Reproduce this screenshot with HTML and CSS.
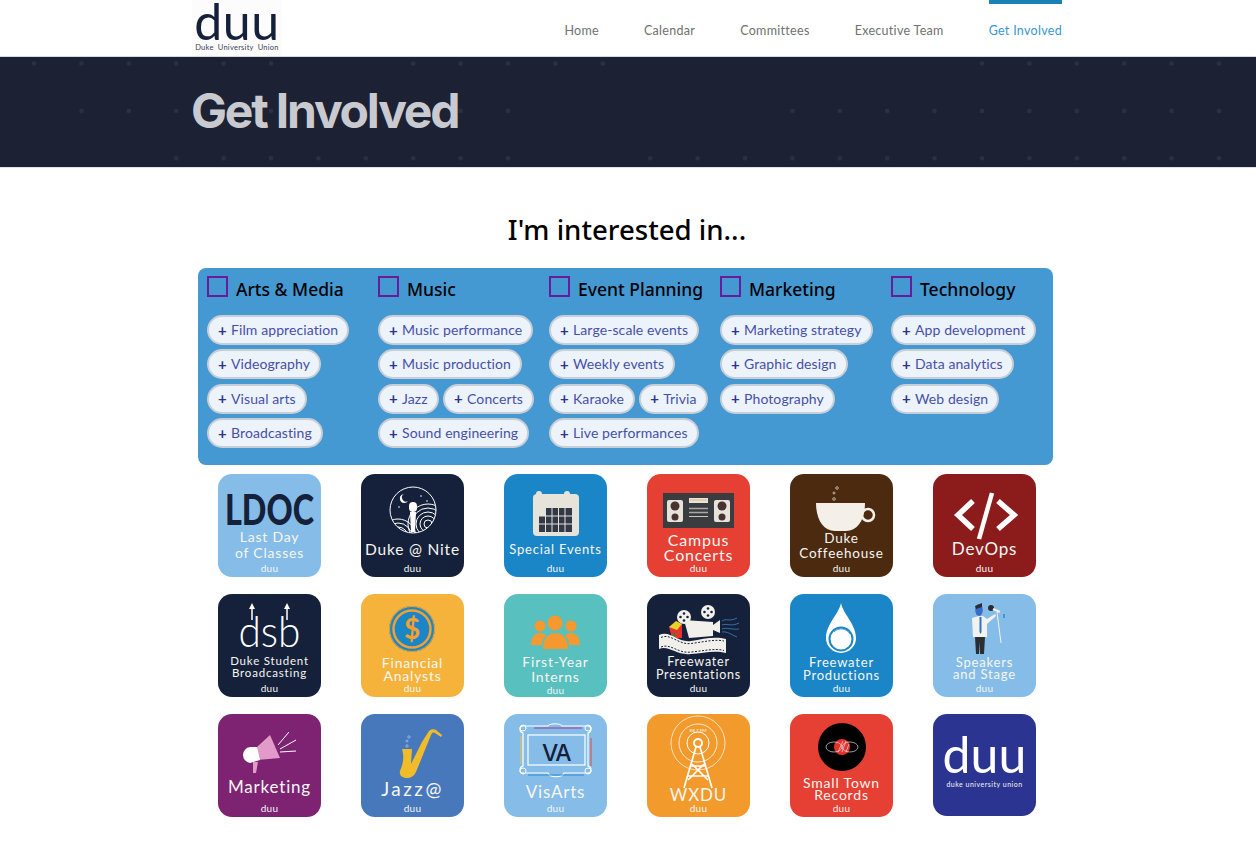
FILE: index.html
```html
<!DOCTYPE html>
<html lang="en">
<head>
  <meta charset="UTF-8">
  <title>Get Involved</title>
  <link rel="stylesheet" href="styles.css">
</head>
<body>
  <!-- Top nav -->
  <header class="topbar">
    <div class="wrap topbar-inner">
      <a class="logo" href="#">
        <span class="logo-word">duu</span>
        <span class="logo-sub">Duke University Union</span>
      </a>
      <nav class="nav">
        <a href="#">Home</a>
        <a href="#">Calendar</a>
        <a href="#">Committees</a>
        <a href="#">Executive Team</a>
        <a href="#" class="active">Get Involved</a>
      </nav>
    </div>
  </header>

  <section class="hero">
    <svg class="hero-dots" width="1256" height="110" aria-hidden="true">
      <defs>
        <pattern id="dots" x="10.300" y="-17.200" width="47.400" height="47.400" patternUnits="userSpaceOnUse">
          <circle cx="23.700" cy="23.700" r="2.300" fill="#2b3042"/>
        </pattern>
      </defs>
      <g fill="url(#dots)">
        <rect x="20" y="0" width="270" height="13"/>
        <rect x="400" y="0" width="220" height="13"/>
        <rect x="970" y="0" width="270" height="13"/>
        <rect x="70" y="47" width="120" height="13"/>
        <rect x="260" y="47" width="25" height="13"/>
        <rect x="450" y="47" width="70" height="13"/>
        <rect x="780" y="47" width="460" height="13"/>
        <rect x="165" y="95" width="355" height="13"/>
        <rect x="640" y="95" width="600" height="13"/>
      </g>
    </svg>
    <div class="wrap">
      <h1>Get Involved</h1>
    </div>
  </section>

  <main class="wrap">
    <h2 class="interest-title">I'm interested in...</h2>

    <!-- Interest filters -->
    <div class="filters">
      <div class="filter-col">
        <label class="filter-head"><span class="box"></span>Arts &amp; Media</label>
        <div class="pills">
          <span class="pill"><b>+</b>Film appreciation</span>
          <span class="pill"><b>+</b>Videography</span>
          <span class="pill"><b>+</b>Visual arts</span>
          <span class="pill"><b>+</b>Broadcasting</span>
        </div>
      </div>
      <div class="filter-col">
        <label class="filter-head"><span class="box"></span>Music</label>
        <div class="pills">
          <span class="pill"><b>+</b>Music performance</span>
          <span class="pill"><b>+</b>Music production</span>
          <span class="pill"><b>+</b>Jazz</span>
          <span class="pill"><b>+</b>Concerts</span>
          <span class="pill"><b>+</b>Sound engineering</span>
        </div>
      </div>
      <div class="filter-col">
        <label class="filter-head"><span class="box"></span>Event Planning</label>
        <div class="pills">
          <span class="pill"><b>+</b>Large-scale events</span>
          <span class="pill"><b>+</b>Weekly events</span>
          <span class="pill"><b>+</b>Karaoke</span>
          <span class="pill"><b>+</b>Trivia</span>
          <span class="pill"><b>+</b>Live performances</span>
        </div>
      </div>
      <div class="filter-col">
        <label class="filter-head"><span class="box"></span>Marketing</label>
        <div class="pills">
          <span class="pill"><b>+</b>Marketing strategy</span>
          <span class="pill"><b>+</b>Graphic design</span>
          <span class="pill"><b>+</b>Photography</span>
        </div>
      </div>
      <div class="filter-col">
        <label class="filter-head"><span class="box"></span>Technology</label>
        <div class="pills">
          <span class="pill"><b>+</b>App development</span>
          <span class="pill"><b>+</b>Data analytics</span>
          <span class="pill"><b>+</b>Web design</span>
        </div>
      </div>
    </div>

    <!-- Committee tiles. Each svg is as tall as the space above its label -->
    <div class="tiles">

      <a class="tile c-sky" href="#">
        <svg width="103" height="55" viewBox="0 0 103 55">
          <text x="7" y="51" class="ldoc" textLength="89" lengthAdjust="spacingAndGlyphs">LDOC</text>
        </svg>
        <span class="label s14 h16">Last Day<br>of Classes</span>
        <span class="duu">duu</span>
      </a>

      <a class="tile c-navy" href="#">
        <svg width="103" height="67" viewBox="0 0 103 67">
          <defs><clipPath id="nite"><circle cx="52" cy="36" r="23"/></clipPath></defs>
          <circle cx="52" cy="36" r="23" fill="none" stroke="#fff" stroke-width="1"/>
          <g clip-path="url(#nite)" fill="none" stroke="#fff" stroke-width="1">
            <circle cx="67" cy="50" r="4"/><circle cx="67" cy="50" r="8"/><circle cx="67" cy="50" r="12"/><circle cx="67" cy="50" r="16"/><circle cx="67" cy="50" r="20"/>
            <circle cx="37" cy="63" r="6"/><circle cx="37" cy="63" r="10"/><circle cx="37" cy="63" r="14"/><circle cx="37" cy="63" r="18"/>
          </g>
          <path d="M43 20a4.500 4.500 0 1 0 4 7a4 4 0 0 1-4-7z" fill="#fff"/>
          <circle cx="60" cy="22" r=".8" fill="#fff"/><circle cx="66" cy="27" r=".8" fill="#fff"/><circle cx="38" cy="33" r=".8" fill="#fff"/>
          <rect x="48" y="28" width="8" height="10" rx="4" fill="#fff"/>
          <path d="M49 38h6l-1 20h-4z" fill="#fff"/>
        </svg>
        <span class="label s155 h16">Duke @ Nite</span>
        <span class="duu">duu</span>
      </a>

      <a class="tile c-blue" href="#">
        <svg width="103" height="67" viewBox="0 0 103 67">
          <rect x="29" y="20" width="46" height="42" rx="4" fill="#e6e3da"/>
          <rect x="32" y="17" width="6" height="6" rx="3" fill="#e6e3da"/>
          <rect x="60" y="17" width="6" height="6" rx="3" fill="#e6e3da"/>
          <rect x="35" y="34" width="33" height="24" fill="#333846"/>
          <rect x="35" y="34" width="6" height="8" fill="#e6e3da"/>
          <path d="M41.500 34v24M48 34v24M54.500 34v24M61 34v24M35 42h33M35 50h33" stroke="#e6e3da" stroke-width="1"/>
        </svg>
        <span class="label s13 h16">Special Events</span>
        <span class="duu">duu</span>
      </a>

      <a class="tile c-red" href="#">
        <svg width="103" height="58" viewBox="0 0 103 58">
          <rect x="16" y="19" width="71" height="35" fill="#3a3c40"/>
          <rect x="20" y="26" width="16" height="22" rx="2" fill="#e6e3da"/>
          <rect x="67" y="26" width="16" height="22" rx="2" fill="#e6e3da"/>
          <circle cx="28" cy="32" r="4.500" fill="#4a3230"/><circle cx="28" cy="43" r="3.500" fill="#4a3230"/>
          <circle cx="75" cy="32" r="4.500" fill="#4a3230"/><circle cx="75" cy="43" r="3.500" fill="#4a3230"/>
          <rect x="42" y="24" width="19" height="5" fill="#e6e3da"/>
          <rect x="43" y="25.500" width="17" height="1" fill="#e8b878"/>
          <path d="M42 34.500h19M42 38.500h19" stroke="#a8a8a4" stroke-width="1.500"/>
          <path d="M42 42.500h19" stroke="#c8c8c4" stroke-width="1"/>
        </svg>
        <span class="label s16 h15">Campus<br>Concerts</span>
        <span class="duu">duu</span>
      </a>

      <a class="tile c-brown" href="#">
        <svg width="103" height="57" viewBox="0 0 103 57">
          <path d="M26 29H75C75 45 68 57 56 57H45C33 57 26 45 26 29z" fill="#f4efe9"/>
          <circle cx="78" cy="41" r="6" fill="none" stroke="#f4efe9" stroke-width="2.500"/>
          <g fill="none" stroke="#d8cfc4" stroke-width=".8">
            <circle cx="47" cy="14" r="1.300"/><circle cx="44" cy="19" r="1"/><circle cx="44" cy="25" r="1.300"/>
          </g>
        </svg>
        <span class="label s135 h15">Duke<br>Coffeehouse</span>
        <span class="duu">duu</span>
      </a>

      <a class="tile c-maroon" href="#">
        <svg width="103" height="67" viewBox="0 0 103 67">
          <g fill="none" stroke="#fff" stroke-width="5.500">
            <path d="M40 27L25 41L40 55"/>
            <path d="M65 27L81 41L65 55"/>
            <path d="M59 19L46 65" stroke-width="4.500"/>
          </g>
        </svg>
        <span class="label s17 h16">DevOps</span>
        <span class="duu">duu</span>
      </a>

      <a class="tile c-navy" href="#">
        <svg width="103" height="61" viewBox="0 0 103 61">
          <text x="51.500" y="53" class="dsb" text-anchor="middle" textLength="62" lengthAdjust="spacingAndGlyphs">dsb</text>
          <path d="M34 12V26M69 12V26" stroke="#fff" stroke-width="1.500"/>
          <path d="M31 15L34 9L37 15zM66 15L69 9L72 15z" fill="#fff"/>
        </svg>
        <span class="label s115 h12">Duke Student<br>Broadcasting</span>
        <span class="duu">duu</span>
      </a>

      <a class="tile c-gold" href="#">
        <svg width="103" height="62" viewBox="0 0 103 62">
          <circle cx="51" cy="35" r="23" fill="#1a86c8"/>
          <circle cx="51" cy="35" r="18.500" fill="none" stroke="#f3a02f" stroke-width="2.500"/>
          <circle cx="51" cy="35" r="22.500" fill="none" stroke="#f3a02f" stroke-width="1"/>
          <text x="51" y="45" class="dollar" text-anchor="middle">$</text>
        </svg>
        <span class="label s14 h13">Financial<br>Analysts</span>
        <span class="duu">duu</span>
      </a>

      <a class="tile c-teal" href="#">
        <svg width="103" height="60" viewBox="0 0 103 60" fill="#f3992f">
          <circle cx="36" cy="32" r="5.500"/><circle cx="67" cy="32" r="5.500"/><circle cx="51" cy="29" r="7.500"/>
          <path d="M27 51C27 43 31 39 36 39C39 39 41 40 42 42C39 44 38 47 38 51z"/>
          <path d="M76 51C76 43 72 39 67 39C64 39 62 40 61 42C64 44 65 47 65 51z"/>
          <path d="M39 55C39 45 44 39 51.500 39C59 39 64 45 64 55z"/>
        </svg>
        <span class="label s14 h15">First-Year<br>Interns</span>
        <span class="duu">duu</span>
      </a>

      <a class="tile c-navy" href="#">
        <svg width="103" height="61" viewBox="0 0 103 61">
          <path d="M37 26L66 28V42L42 44z" fill="#f2f0ea"/>
          <path d="M66 31L73 26V39L66 36z" fill="#f2f0ea"/>
          <circle cx="37" cy="23" r="7" fill="#f2f0ea"/><circle cx="61" cy="18" r="7" fill="#f2f0ea"/>
          <g fill="#15203a">
            <circle cx="37" cy="19.500" r="1.300"/><circle cx="37" cy="26.500" r="1.300"/><circle cx="33.500" cy="23" r="1.300"/><circle cx="40.500" cy="23" r="1.300"/>
            <circle cx="61" cy="14.500" r="1.300"/><circle cx="61" cy="21.500" r="1.300"/><circle cx="57.500" cy="18" r="1.300"/><circle cx="64.500" cy="18" r="1.300"/>
          </g>
          <path d="M22 33L35 30V44H25z" fill="#e5322d"/>
          <path d="M22 33L29 27L35 30L30 36z" fill="#e9d02c"/>
          <path d="M24 44L28 37V44z" fill="#1d8a4a"/>
          <g fill="none" stroke="#3a86c8" stroke-width=".8">
            <path d="M75 27C79 24 83 28 90 24"/><path d="M75 31C80 29 84 33 92 29"/><path d="M75 35C80 33 85 36 92 35"/><path d="M75 38C80 37 85 41 90 43"/>
          </g>
          <path d="M12 41C24 36 30 49 44 47C56 45 68 42 79 45V59C68 56 56 59 44 60C30 62 22 51 12 55z" fill="#f2f0ea"/>
          <path d="M14 43.500C24 39 31 51 44 49.500C56 48 68 45 77 47M14 53C24 49 31 60 44 58C56 57 68 54 77 56.500" fill="none" stroke="#15203a" stroke-width="1" stroke-dasharray="2 1.500"/>
        </svg>
        <span class="label s125 h13">Freewater<br>Presentations</span>
        <span class="duu">duu</span>
      </a>

      <a class="tile c-blue" href="#">
        <svg width="103" height="62" viewBox="0 0 103 62">
          <path d="M51 9C53 20 66 30 66 44A15 15 0 0 1 36 44C36 30 49 20 51 9z" fill="#fff"/>
          <circle cx="51" cy="45" r="11.500" fill="none" stroke="#1a86c8" stroke-width="2"/>
          <path d="M44 38A10 10 0 0 1 60 40" fill="none" stroke="#1a86c8" stroke-width=".8"/>
        </svg>
        <span class="label s13 h13">Freewater<br>Productions</span>
        <span class="duu">duu</span>
      </a>

      <a class="tile c-sky" href="#">
        <svg width="103" height="62" viewBox="0 0 103 62">
          <path d="M42 43H52L51 60H47L46.500 48L46 60H43z" fill="#2b2d33"/>
          <path d="M39 24L46 22H50L54 25L62 20L63 22L54 30V43H40z" fill="#f2f2ee"/>
          <path d="M46.500 23H48.500L48.500 38L47.500 40L46.500 38z" fill="#2f74c0"/>
          <ellipse cx="46" cy="16" rx="3.800" ry="6" fill="#3a6bc8"/>
          <path d="M42 12L49 9V13L43 15z" fill="#2b2d33"/>
          <circle cx="58" cy="14" r="3" fill="#2b2d33"/>
          <path d="M60 15L67 18" stroke="#f2f2ee" stroke-width="2"/>
          <path d="M64 18L68 49" stroke="#f2f2ee" stroke-width="1"/>
          <path d="M71 20V24" stroke="#2f8ad0" stroke-width="1.500"/>
        </svg>
        <span class="label s13 h12">Speakers<br>and Stage</span>
        <span class="duu">duu</span>
      </a>

      <a class="tile c-purple" href="#">
        <svg width="103" height="64" viewBox="0 0 103 64">
          <path d="M39 33L52 21L62 44L39 46z" fill="#e29bc8"/>
          <path d="M35 48H40L38 59H35z" fill="#e29bc8"/>
          <path d="M32 33H39L42 46L32 49A8 8 0 0 1 25 41A8 8 0 0 1 32 33z" fill="#fff"/>
          <path d="M60 31L71 18M62 35L78 26M62 38L78 37" stroke="#fff" stroke-width="1"/>
        </svg>
        <span class="label s17 h18">Marketing</span>
        <span class="duu">duu</span>
      </a>

      <a class="tile c-steel" href="#">
        <svg width="103" height="66" viewBox="0 0 103 66">
          <path d="M41 35H51L50 50L61 28L68 17C70 15 73 15 75 16L81 21L80 23L74 19C72 18 71 19 70 21L55 58C53 62 50 64 46 64C41 64 38 61 39 57C41 52 44 45 41 35z" fill="#f0bc2a"/>
          <g fill="none" stroke="#9cc0e8" stroke-width=".8">
            <circle cx="48" cy="23" r="1.200"/><circle cx="46" cy="27" r="1"/><circle cx="46" cy="32" r="1.200"/>
          </g>
        </svg>
        <span class="label s19 h18 wide">Jazz@</span>
        <span class="duu">duu</span>
      </a>

      <a class="tile c-sky" href="#">
        <svg width="103" height="70" viewBox="0 0 103 70">
          <path d="M19 12H44C46 9 56 9 58 12H84C88 12 88 18 84 19V52C88 53 88 59 84 59H60C58 64 46 64 44 59H19C15 59 15 53 19 52V19C15 18 15 12 19 12z" fill="none" stroke="#fff" stroke-width="1.200"/>
          <path d="M30 14H78" stroke="#a0399c" stroke-width="1"/>
          <path d="M17 22V50" stroke="#f0c23a" stroke-width="1"/>
          <path d="M87 24V52" stroke="#e5483a" stroke-width="1"/>
          <path d="M24 61H80" stroke="#2f8ad0" stroke-width="1"/>
          <circle cx="19" cy="14" r="3" fill="none" stroke="#fff"/><circle cx="84" cy="14" r="3" fill="none" stroke="#fff"/>
          <circle cx="19" cy="57" r="3" fill="none" stroke="#fff"/><circle cx="84" cy="57" r="3" fill="none" stroke="#fff"/>
          <rect x="24" y="21" width="57" height="30" fill="none" stroke="#fff" stroke-width="1.200"/>
          <text x="52" y="47" class="va" text-anchor="middle">VA</text>
        </svg>
        <span class="label s17 h16">VisArts</span>
        <span class="duu">duu</span>
      </a>

      <a class="tile c-orange" href="#">
        <svg width="103" height="73" viewBox="0 0 103 73">
          <g fill="none" stroke="#fff">
            <circle cx="51" cy="29" r="11" stroke-width="1"/>
            <circle cx="51" cy="29" r="19" stroke-width=".8"/>
            <circle cx="51" cy="29" r="27" stroke-width=".7"/>
            <circle cx="51" cy="29" r="4" stroke-width="2"/>
            <path d="M49 33L37 74M53 33L65 74M44 52H58M41 62H61M45 50L61 66M57 50L41 66" stroke-width="1.700"/>
          </g>
          <text x="51" y="18" class="fm" text-anchor="middle">88.7 FM</text>
        </svg>
        <span class="label s17 h15">WXDU</span>
        <span class="duu">duu</span>
      </a>

      <a class="tile c-red" href="#">
        <svg width="103" height="63" viewBox="0 0 103 63">
          <circle cx="52" cy="33" r="24" fill="#000"/>
          <circle cx="52" cy="33" r="8" fill="#e5322d"/>
          <g fill="none" stroke="#ddd" stroke-width=".7">
            <ellipse cx="44" cy="33" rx="8" ry="5"/><ellipse cx="60" cy="33" rx="8" ry="5"/>
            <path d="M48 38L53 27M52 38L56 27M56 38L59 30"/>
          </g>
        </svg>
        <span class="label s14 h12">Small Town<br>Records</span>
        <span class="duu">duu</span>
      </a>

      <a class="tile c-indigo" href="#">
        <span class="duu-big">duu</span>
        <span class="duu-sub">duke university union</span>
      </a>

    </div>
  </main>
</body>
</html>
```

FILE: styles.css
```css
* {
  box-sizing: border-box;
}
body {
  margin: 0;
  font-family: Lato, sans-serif;
  background: #fff;
  color: #000;
}
a {
  text-decoration: none;
}
.wrap {
  width: 870px;
  margin-left: 192px;
}

/* header */
.topbar {
  height: 57px;
  border-bottom: 1px solid #d9d9d9;
}
.topbar-inner {
  display: flex;
  justify-content: space-between;
  height: 56px;
}
.logo {
  width: 90px;
  height: 56px;
  background: #fcfcfc;
  color: #15203a;
  display: flex;
  flex-direction: column;
  align-items: center;
}
.logo-word {
  font-size: 50px;
  line-height: 42px;
  letter-spacing: .5px;
}
.logo-sub {
  font-size: 7.500px;
  line-height: 12px;
  letter-spacing: .25px;
  word-spacing: 2px;
  color: #3a4258;
  white-space: nowrap;
}
.nav {
  display: flex;
  gap: 45px;
}
.nav a {
  color: #707070;
  font-size: 12.500px;
  letter-spacing: .3px;
  line-height: 53px;
  border-top: 4px solid transparent;
  height: 56px;
}
.nav a.active {
  color: #3a95d0;
  border-top-color: #1a80b6;
}

/* banner */
.hero {
  position: relative;
  height: 111px;
  background-color: #1c2133;
  border-bottom: 1px solid #e2e2e2;
}
.hero-dots {
  position: absolute;
  left: 0;
  top: 0;
}
.hero h1 {
  position: relative;
  margin: 0 0 0 -1px;
  font-family: Inter, sans-serif;
  font-weight: 700;
  font-size: 48px;
  line-height: 108px;
  letter-spacing: -2.200px;
  color: #c9cad0;
}

.interest-title {
  margin: 41px 0 19px;
  width: 870px;
  text-align: center;
  font-family: "Noto Sans", sans-serif;
  font-weight: 500;
  font-size: 27.600px;
  line-height: 40px;
}

/* filters */
.filters {
  display: grid;
  grid-template-columns: repeat(5, 171px);
  width: 855px;
  margin-left: 6px;
  padding: 8px 0 17px;
  background: #4599d3;
  border-radius: 8px;
}
.filter-col {
  padding-left: 9px;
}
.filter-head {
  display: flex;
  align-items: flex-start;
  height: 21px;
  margin-bottom: 18px;
  font-family: "Noto Sans", sans-serif;
  font-weight: 500;
  font-size: 17.500px;
  line-height: 26px;
  white-space: nowrap;
}
.box {
  width: 21px;
  height: 21px;
  border: 2px solid #6a1b9a;
  margin-right: 8px;
  flex: none;
}
.pills {
  display: flex;
  flex-wrap: wrap;
  gap: 4.400px;
  width: 162px;
}
.pill {
  display: flex;
  align-items: center;
  height: 30px;
  padding: 0 9px 1px 9px;
  border: 2px solid #c8ced6;
  border-radius: 15px;
  background: #edf3fb;
  color: #4650a8;
  font-size: 14px;
  letter-spacing: .1px;
  white-space: nowrap;
}
.pill b {
  width: 13px;
  flex: none;
  color: #2b3491;
  font-weight: 700;
  font-size: 15px;
}

/* committee tiles */
.tiles {
  display: grid;
  grid-template-columns: repeat(6, 103px);
  column-gap: 40px;
  row-gap: 17px;
  margin: 9px 0 24px 26px;
}
.tile {
  display: flex;
  flex-direction: column;
  align-items: center;
  height: 103px;
  border-radius: 14px;
  padding-bottom: 3px;
  color: #f6f6f2;
}
.tile svg {
  flex: none;
  display: block;
  overflow: visible;
}
.label {
  text-align: center;
  letter-spacing: .8px;
  white-space: nowrap;
}
.label.wide {
  letter-spacing: 2.500px;
}
.duu {
  margin-top: auto;
  font-size: 10px;
  line-height: 12px;
  letter-spacing: .3px;
}
.s115 { font-size: 11.500px; }
.s125 { font-size: 12.500px; }
.s13 { font-size: 13px; }
.s135 { font-size: 13.500px; }
.s14 { font-size: 14px; }
.s155 { font-size: 15.500px; }
.s16 { font-size: 16px; }
.s17 { font-size: 17px; }
.s19 { font-size: 19px; }
.h12 { line-height: 12px; }
.h13 { line-height: 13px; }
.h15 { line-height: 15px; }
.h16 { line-height: 16px; }
.h18 { line-height: 18px; }

.c-sky { background: #85bde8; }
.c-navy { background: #15203a; }
.c-blue { background: #1a86c8; }
.c-red { background: #e63f33; }
.c-brown { background: #4b2a10; }
.c-maroon { background: #8c1b1c; }
.c-gold { background: #f5b33b; }
.c-teal { background: #58c0bf; }
.c-purple { background: #7e2272; }
.c-steel { background: #4878bc; }
.c-orange { background: #f39a2d; }
.c-indigo {
  background: #2b3491;
  height: 102px;
  justify-content: flex-start;
}

/* text inside the tile art */
.ldoc {
  font-family: Lato, sans-serif;
  font-weight: 900;
  font-size: 42px;
  fill: #15203a;
}
.dsb {
  font-family: Lato, sans-serif;
  font-weight: 300;
  font-size: 44px;
  fill: #fff;
}
.dollar {
  font-family: Lato, sans-serif;
  font-weight: 700;
  font-size: 28px;
  fill: #f3a02f;
}
.va {
  font-family: Inter, sans-serif;
  font-weight: 500;
  font-size: 23px;
  letter-spacing: -1.500px;
  fill: #15203a;
}
.fm {
  font-family: Lato, sans-serif;
  font-size: 4.500px;
  fill: #fff;
}
.duu-big {
  font-size: 50px;
  line-height: 50px;
  margin-top: 15px;
  color: #fff;
}
.duu-sub {
  font-size: 7px;
  line-height: 10px;
  letter-spacing: .5px;
}
```
